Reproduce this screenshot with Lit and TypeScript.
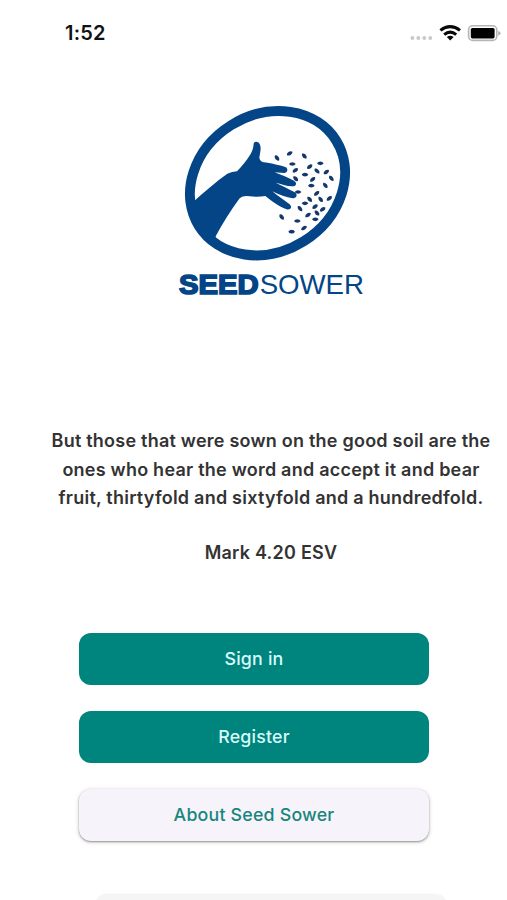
import { LitElement, html, css, svg } from "lit";
import { customElement } from "lit/decorators.js";

// Seed positions in the emblem: centre x, centre y, rotation in degrees
const SEEDS: [number, number, number][] = [
  [321, 189, 50], [359, 175, -30], [403, 183, 48], [367, 207, 0], [451, 205, 0],
  [419, 215, -35], [376, 226, -35], [441, 228, 42], [469, 231, -38], [405, 239, 0],
  [377, 251, 45], [428, 253, -38], [484, 250, 50], [424, 272, 0], [466, 271, 52],
  [384, 291, 0], [440, 295, -38], [419, 313, 48], [478, 310, -38], [452, 313, 52],
  [405, 325, 0], [435, 335, -35], [390, 341, 50], [458, 343, -35], [441, 354, 48],
  [414, 360, -35], [335, 366, 50], [436, 373, 0], [382, 378, 0], [402, 399, -30],
  [365, 410, 0],
];

@customElement("status-bar")
class StatusBar extends LitElement {
  static styles = css`
    :host { display: flex; flex: none; justify-content: space-between; align-items: center; height: 66px; padding: 0 5px 0 65px; box-sizing: border-box; }
    .time { font: 600 20px/24px Inter, "Liberation Sans", sans-serif; color: #111; letter-spacing: 0.2px; }
    .icons { display: block; width: 92px; height: 24px; }
  `;
  render() {
    return html`
      <span class="time">1:52</span>
      <svg class="icons" viewBox="0 0 92 24">
        <g fill="#c9c9c9">
          <circle cx="2.4" cy="17" r="1.9" /><circle cx="8.3" cy="17" r="1.9" />
          <circle cx="14.3" cy="17" r="1.9" /><circle cx="20.3" cy="17" r="1.9" />
        </g>
        <g fill="none" stroke="#080808" stroke-width="3.1">
          <path d="M30.4 9.4Q40.2 1.8 50 9.4" />
          <path d="M34.2 13.6Q40.2 8.6 46.2 13.6" />
        </g>
        <path fill="#080808" d="M36.8 16Q40.2 13.6 43.6 16L40.2 19.4Z" />
        <rect x="58.6" y="4.8" width="28.2" height="14.6" rx="4.2" fill="#fff" stroke="#b5b5b5" stroke-width="1.6" />
        <rect x="60.8" y="7" width="23.8" height="10.4" rx="1.6" fill="#000" />
        <path d="M88.2 9.7Q90.6 10.8 90.6 12.2T88.2 14.7Z" fill="#b0b0b0" />
      </svg>`;
  }
}

@customElement("brand-logo")
class BrandLogo extends LitElement {
  static styles = css`
    :host { display: block; flex: none; width: 200px; height: 210px; }
    .logo { display: block; width: 100%; height: 100%; }
    .name { font-family: "Liberation Sans", Arial, sans-serif; font-size: 83px; fill: #044587; }
    .heavy { font-weight: 700; stroke: #044587; stroke-width: 5; font-size: 82px; }
  `;
  render() {
    return html`
      <svg class="logo" viewBox="0 0 600 630">
        <clipPath id="disc"><ellipse cx="292.5" cy="264.5" rx="250" ry="213" transform="rotate(-32 292.5 264.5)" /></clipPath>
        <ellipse cx="292.5" cy="264.5" rx="242.5" ry="205.3" transform="rotate(-32 292.5 264.5)" fill="none" stroke="#044587" stroke-width="30" />
        <path clip-path="url(#disc)" fill="#044587" d="M70 320C105 288 140 259 172 236Q186 230 201 229C217 213 229 197 240 180C249 166 250 155 251 146C253 138 265 139 269 147C275 157 270 173 268 188Q270 199 281 202C300 204 329 211 346 216C356 220 353 234 342 234L314 232C333 240 356 248 372 257C383 264 378 275 366 274C350 273 333 267 317 263C335 272 355 281 373 291C385 298 380 311 368 310C349 308 328 299 307 289C324 303 341 315 357 326C369 335 362 346 350 343C329 336 306 319 286 303Q265 307 239 304Q219 301 209 310C183 345 158 385 137 424L139 460L40 460L40 330Z" />
        <g fill="#16376b">
          ${SEEDS.map(([x, y, a]) => svg`<path d="M-10 0Q-7 -5.5 0 -5.5T10 0Q7 5.5 0 5.5T-10 0Z" transform="translate(${x} ${y}) rotate(${a})" />`)}
        </g>
        <text class="name heavy" x="27" y="597" textLength="239" lengthAdjust="spacingAndGlyphs">SEED</text>
        <text class="name" x="269" y="598" textLength="313" lengthAdjust="spacingAndGlyphs">SOWER</text>
      </svg>`;
  }
}

@customElement("app-root")
class AppRoot extends LitElement {
  static styles = css`
    :host { display: flex; flex-direction: column; height: 900px; overflow: hidden; background: #fff; font-family: Inter, "Liberation Sans", sans-serif; }
    .brand { margin: 29px 0 0 170px; }
    .verse { flex: none; margin: 122px 0 0 35px; width: 472px; text-align: center; color: #333; font-weight: 620; font-size: 18px; letter-spacing: 0.23px; line-height: 28.5px; white-space: nowrap; }
    .verse p { margin: 0; }
    .verse .source { margin-top: 26px; }
    .actions { display: flex; flex: none; flex-direction: column; gap: 26px; margin: 66px 78px 0 79px; }
    .btn { height: 52px; border: 0; border-radius: 12px; padding: 0; font: 500 17.8px/52px Inter, "Liberation Sans", sans-serif; letter-spacing: 0.2px; background: #00847e; color: #d8fbf9; }
    .plain { background: #f7f3fa; color: #17867c; box-shadow: 0 1px 2px rgba(0, 0, 0, 0.38), 0 1px 4px 1px rgba(0, 0, 0, 0.1); }
    .next { flex: none; height: 52px; margin: 53px 60px 0 95px; border-radius: 12px; background: #f5f5f5; box-shadow: 0 0 2px #f0f0f0; }
  `;
  render() {
    return html`
      <status-bar></status-bar>
      <brand-logo class="brand"></brand-logo>
      <div class="verse">
        <p>But those that were sown on the good soil are the<br />ones who hear the word and accept it and bear<br />fruit, thirtyfold and sixtyfold and a hundredfold.</p>
        <p class="source">Mark 4.20 ESV</p>
      </div>
      <div class="actions">
        <button class="btn">Sign in</button>
        <button class="btn">Register</button>
        <button class="btn plain">About Seed Sower</button>
      </div>
      <div class="next"></div>`;
  }
}
